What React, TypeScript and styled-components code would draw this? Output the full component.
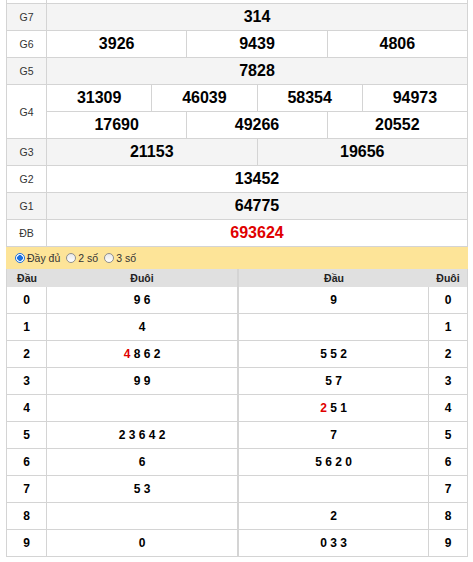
import React from 'react';
import styled, { createGlobalStyle } from 'styled-components';

const Global = createGlobalStyle`
  html, body { margin: 0; padding: 0; background: #fff; }
  body { font-family: "Liberation Sans", Arial, sans-serif; color: #000; }
  * { box-sizing: border-box; }
`;

const LINE = '#d4d4d4';

const Page = styled.div`
  width: 462px;
  margin: 0 0 0 6px;
`;

const PrizeTable = styled.div`
  border-left: 1px solid ${LINE};
  border-right: 1px solid ${LINE};
`;

const PrizeRow = styled.div<{ $alt: boolean }>`
  display: flex;
  background: ${(p) => (p.$alt ? '#f4f4f4' : '#fff')};
  border-bottom: 1px solid ${LINE};
`;

const StubRow = styled.div`
  display: flex;
  height: 4px;
  border-bottom: 1px solid ${LINE};
`;

const StubLabel = styled.div`
  width: 40px;
  flex: none;
  border-right: 1px solid ${LINE};
`;

const Label = styled.div`
  width: 40px;
  flex: none;
  border-right: 1px solid ${LINE};
  display: flex;
  align-items: center;
  justify-content: center;
  font-size: 10.5px;
  color: #333;
`;

const Lines = styled.div`
  flex: 1;
  display: flex;
  flex-direction: column;
`;

const Line = styled.div`
  display: flex;
  height: 26px;
  & + & {
    border-top: 1px solid ${LINE};
    height: 27px;
  }
`;

const Num = styled.div<{ $red?: boolean }>`
  flex: 1 1 0;
  display: flex;
  align-items: center;
  justify-content: center;
  font-weight: bold;
  font-size: 16px;
  color: ${(p) => (p.$red ? '#e00000' : '#000')};
  & + & {
    border-left: 1px solid ${LINE};
  }
`;

const OptionBar = styled.div`
  height: 22px;
  background: #fde498;
  display: flex;
  align-items: center;
  gap: 6px;
  padding-left: 9px;
  font-size: 10.5px;
  color: #333;
`;

const Option = styled.label`
  display: flex;
  align-items: center;
  gap: 2px;
`;

const Radio = styled.input.attrs({ type: 'radio', name: 'loto-mode' })`
  appearance: none;
  margin: 0;
  width: 10px;
  height: 10px;
  border-radius: 50%;
  border: 1px solid #8f8f8f;
  background: linear-gradient(#e8e8e8, #fff);
  &:checked {
    border-color: #1a6fe0;
    background: radial-gradient(circle, #1a6fe0 0 2.6px, #fff 3.1px);
  }
`;

const LotoWrap = styled.div`
  display: flex;
`;

const LotoTable = styled.div<{ $cols: string; $w: number }>`
  width: ${(p) => p.$w}px;
  display: grid;
  grid-template-columns: ${(p) => p.$cols};
  border-left: 1px solid ${LINE};
  border-right: 1px solid ${LINE};
`;

const HeadCell = styled.div`
  height: 18px;
  background: #e0e0e0;
  display: flex;
  align-items: center;
  justify-content: center;
  font-weight: bold;
  font-size: 10.5px;
  color: #222;
`;

const Cell = styled.div<{ $divide?: boolean }>`
  height: 27px;
  border-bottom: 1px solid ${LINE};
  border-right: ${(p) => (p.$divide ? `1px solid ${LINE}` : 'none')};
  display: flex;
  align-items: center;
  justify-content: center;
  font-weight: bold;
  font-size: 12px;
  color: #000;
  white-space: pre;
`;

const Hot = styled.span`
  color: #e00000;
`;

type Prize = { label: string; lines: string[][]; red?: boolean };

const prizes: Prize[] = [
  { label: 'G7', lines: [['314']] },
  { label: 'G6', lines: [['3926', '9439', '4806']] },
  { label: 'G5', lines: [['7828']] },
  { label: 'G4', lines: [['31309', '46039', '58354', '94973'], ['17690', '49266', '20552']] },
  { label: 'G3', lines: [['21153', '19656']] },
  { label: 'G2', lines: [['13452']] },
  { label: 'G1', lines: [['64775']] },
  { label: 'ĐB', lines: [['693624']], red: true },
];

type Digits = { hot?: string; rest: string };

const duoi: Digits[] = [
  { rest: '9 6' },
  { rest: '4' },
  { hot: '4', rest: ' 8 6 2' },
  { rest: '9 9' },
  { rest: '' },
  { rest: '2 3 6 4 2' },
  { rest: '6' },
  { rest: '5 3' },
  { rest: '' },
  { rest: '0' },
];

const dau: Digits[] = [
  { rest: '9' },
  { rest: '' },
  { rest: '5 5 2' },
  { rest: '5 7' },
  { hot: '2', rest: ' 5 1' },
  { rest: '7' },
  { rest: '5 6 2 0' },
  { rest: '' },
  { rest: '2' },
  { rest: '0 3 3' },
];

const Digs = ({ d }: { d: Digits }) => (
  <>
    {d.hot && <Hot>{d.hot}</Hot>}
    {d.rest}
  </>
);

export default function App() {
  return (
    <>
      <Global />
      <Page>
        <PrizeTable>
          <StubRow>
            <StubLabel />
          </StubRow>
          {prizes.map((p, i) => (
            <PrizeRow key={p.label} $alt={i % 2 === 0}>
              <Label>{p.label}</Label>
              <Lines>
                {p.lines.map((line, j) => (
                  <Line key={j}>
                    {line.map((n) => (
                      <Num key={n} $red={p.red}>
                        {n}
                      </Num>
                    ))}
                  </Line>
                ))}
              </Lines>
            </PrizeRow>
          ))}
        </PrizeTable>
        <OptionBar>
          <Option>
            <Radio defaultChecked />
            Đầy đủ
          </Option>
          <Option>
            <Radio />2 số
          </Option>
          <Option>
            <Radio />3 số
          </Option>
        </OptionBar>
        <LotoWrap>
          <LotoTable $w={232} $cols="40px 190px">
            <HeadCell>Đầu</HeadCell>
            <HeadCell>Đuôi</HeadCell>
            {duoi.map((d, i) => (
              <React.Fragment key={i}>
                <Cell $divide>{i}</Cell>
                <Cell>
                  <Digs d={d} />
                </Cell>
              </React.Fragment>
            ))}
          </LotoTable>
          <LotoTable $w={230} $cols="190px 38px">
            <HeadCell>Đầu</HeadCell>
            <HeadCell>Đuôi</HeadCell>
            {dau.map((d, i) => (
              <React.Fragment key={i}>
                <Cell $divide>
                  <Digs d={d} />
                </Cell>
                <Cell>{i}</Cell>
              </React.Fragment>
            ))}
          </LotoTable>
        </LotoWrap>
      </Page>
    </>
  );
}
